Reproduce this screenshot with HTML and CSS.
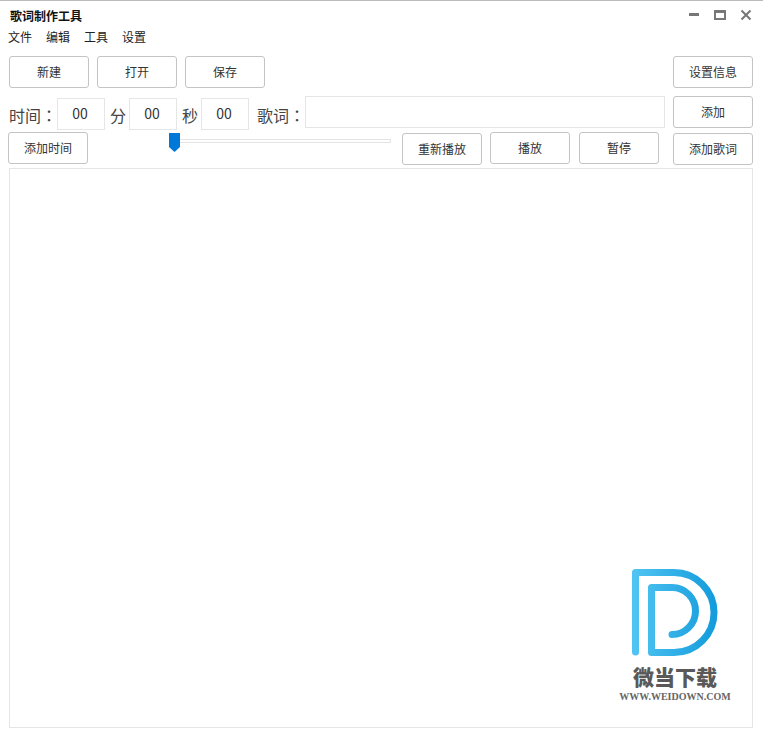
FILE: index.html
```html
<!DOCTYPE html>
<html lang="zh-CN">
<head>
  <meta charset="UTF-8" />
  <title>歌词制作工具</title>
  <link rel="stylesheet" href="styles.css">
</head>
<body>
  <main class="window">
    <div class="title-bar">
      <h1 class="title">歌词制作工具</h1>
      <div class="win-btns">
        <svg class="win-icon" width="12" height="12" viewBox="0 0 12 12"><rect x="1" y="4" width="10" height="3"/></svg>
        <svg class="win-icon" width="12" height="12" viewBox="0 0 12 12"><path fill-rule="evenodd" d="M0 1h12v10H0zM2 4v5h8V4z"/></svg>
        <svg class="win-icon" width="12" height="12" viewBox="0 0 12 12"><path d="M1.500 1.500l9 9M10.500 1.500l-9 9" fill="none" stroke="#777" stroke-width="2"/></svg>
      </div>
    </div>

    <nav class="menu">
      <span>文件</span>
      <span>编辑</span>
      <span>工具</span>
      <span>设置</span>
    </nav>

    <div class="row row-file">
      <button class="btn">新建</button>
      <button class="btn">打开</button>
      <button class="btn">保存</button>
      <button class="btn push-right">设置信息</button>
    </div>

    <div class="row row-time">
      <label class="lbl lbl-time">时间<span class="colon" lang="zh-TW">：</span></label>
      <input class="box num" type="text" value="00" />
      <label class="lbl lbl-unit">分</label>
      <input class="box num" type="text" value="00" />
      <label class="lbl lbl-unit">秒</label>
      <input class="box num" type="text" value="00" />
      <label class="lbl lbl-lyric">歌词<span class="colon" lang="zh-TW">：</span></label>
      <input class="box lyric" type="text" />
      <button class="btn btn-add">添加</button>
    </div>

    <div class="row row-play">
      <button class="btn">添加时间</button>
      <div class="slider">
        <div class="slider-track"></div>
        <svg class="slider-thumb" width="11" height="19" viewBox="0 0 11 19"><path d="M0 0h11v14l-5.500 5L0 14z"/></svg>
      </div>
      <button class="btn btn-low">重新播放</button>
      <button class="btn">播放</button>
      <button class="btn">暂停</button>
      <button class="btn btn-low btn-last">添加歌词</button>
    </div>

    <div class="lyric-list"></div>

    <div class="watermark">
      <svg width="90" height="92" viewBox="0 0 90 92">
        <defs>
          <linearGradient id="logoBlue" x1="0" y1="0" x2="1" y2="0">
            <stop offset="0" stop-color="#4fc3f2"/>
            <stop offset="1" stop-color="#149cdc"/>
          </linearGradient>
        </defs>
        <path d="M3.500 83V3.500H42A40 40 0 0 1 42 83.500H19.500V18.500H40A23.500 23.500 0 0 1 40 65.500" fill="none" stroke="url(#logoBlue)" stroke-width="7" stroke-linecap="round" stroke-linejoin="round"/>
      </svg>
      <div class="wm-name">微当下载</div>
      <div class="wm-url">WWW.WEIDOWN.COM</div>
    </div>
  </main>
</body>
</html>
```

FILE: styles.css
```css
* {
  box-sizing: border-box;
  margin: 0;
  padding: 0;
  font-family: "Noto Sans CJK SC", "Liberation Sans", sans-serif;
}
body {
  background: #fff;
  color: #333;
}
.window {
  position: relative;
  width: 763px;
  height: 734px;
  border-top: 1px solid #bbb;
  overflow: hidden;
}

.title-bar {
  display: flex;
  justify-content: space-between;
  align-items: center;
  height: 27px;
  padding: 1px 11px 0 10px;
}
.title {
  font-size: 12px;
  font-weight: 700;
  color: #111;
}
.win-btns {
  display: flex;
  gap: 14px;
}
.win-icon {
  fill: #777;
}

.menu {
  display: flex;
  gap: 14px;
  height: 28px;
  padding-left: 8px;
  font-size: 12px;
  line-height: 18px;
  color: #222;
}

.row {
  display: flex;
}
.row-file {
  gap: 8px;
  height: 40px;
  padding: 0 10px 0 9px;
}
.row-time {
  height: 36px;
  padding: 0 10px 0 9px;
}
.row-play {
  height: 36px;
  padding: 0 10px 0 8px;
}

.btn {
  flex: none;
  width: 80px;
  height: 32px;
  padding-bottom: 2px;
  background: #fff;
  border: 1px solid #c4c4c4;
  border-radius: 3px;
  font-size: 12px;
  color: #333;
}
.push-right {
  margin-left: auto;
}
.btn-add {
  margin-left: 8px;
}
.btn-low {
  margin-top: 1px;
}

.lbl {
  flex: none;
  font-size: 16px;
  line-height: 38px;
  white-space: nowrap;
  color: #444;
}
.lbl-time {
  width: 48px;
}
.lbl-unit {
  width: 24px;
  padding-left: 5px;
}
.lbl-lyric {
  width: 56px;
  padding-left: 8px;
}
/* TC fonts centre the full-width colon */
.colon {
  font-family: "Noto Sans CJK TC", sans-serif;
}
.box {
  flex: none;
  height: 32px;
  margin-top: 2px;
  border: 1px solid #e6e6e6;
  background: #fff;
  color: #333;
  outline: none;
}
.num {
  width: 48px;
  padding: 0 2px 2px 0;
  font-size: 14px;
  text-align: center;
}
.lyric {
  width: 360px;
  margin-top: 0;
}

.slider {
  position: relative;
  flex: none;
  width: 221px;
  height: 20px;
  margin: 0 11px 0 82px;
}
.slider-track {
  width: 100%;
  height: 4px;
  margin-top: 7px;
  background: #fff;
  border: 1px solid #e4e4e4;
}
.slider-thumb {
  position: absolute;
  left: -1px;
  top: 1px;
  fill: #0078d7;
}
.row-play .btn:nth-child(4) {
  margin-left: 8px;
}
.row-play .btn:nth-child(5) {
  margin-left: 9px;
}
.btn-last {
  margin-left: 14px;
}

.lyric-list {
  height: 560px;
  margin: 0 10px 0 9px;
  border: 1px solid #e6e6e6;
  background: #fff;
}

.watermark {
  position: absolute;
  left: 605px;
  top: 568px;
  width: 140px;
  display: flex;
  flex-direction: column;
  align-items: center;
}
.watermark svg {
  display: block;
  margin-left: 3px;
}
.wm-name {
  margin-top: 2px;
  font-size: 21px;
  line-height: 26px;
  font-weight: 900;
  color: #595959;
}
.wm-url {
  margin-top: 2px;
  font-family: "Liberation Serif", serif;
  font-size: 10px;
  line-height: 12px;
  font-weight: 700;
  color: #666;
}
```
